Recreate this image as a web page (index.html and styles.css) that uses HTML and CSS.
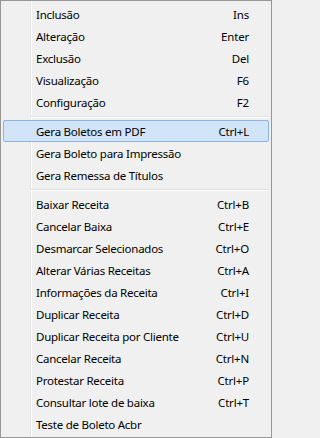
FILE: index.html
```html
<!DOCTYPE html>
<html>
<head>
<meta charset="utf-8">
<link rel="stylesheet" href="styles.css">
</head>
<body>
<div class="menu">
  <div class="item"><span class="label">Inclusão</span><span class="key">Ins</span></div>
  <div class="item"><span class="label">Alteração</span><span class="key">Enter</span></div>
  <div class="item"><span class="label">Exclusão</span><span class="key">Del</span></div>
  <div class="item"><span class="label">Visualização</span><span class="key">F6</span></div>
  <div class="item"><span class="label">Configuração</span><span class="key">F2</span></div>
  <div class="sep"></div>
  <div class="item active"><span class="label">Gera Boletos em PDF</span><span class="key">Ctrl+L</span></div>
  <div class="item"><span class="label">Gera Boleto para Impressão</span><span class="key"></span></div>
  <div class="item"><span class="label">Gera Remessa de Títulos</span><span class="key"></span></div>
  <div class="sep"></div>
  <div class="item"><span class="label">Baixar Receita</span><span class="key">Ctrl+B</span></div>
  <div class="item"><span class="label">Cancelar Baixa</span><span class="key">Ctrl+E</span></div>
  <div class="item"><span class="label">Desmarcar Selecionados</span><span class="key">Ctrl+O</span></div>
  <div class="item"><span class="label">Alterar Várias Receitas</span><span class="key">Ctrl+A</span></div>
  <div class="item"><span class="label">Informações da Receita</span><span class="key">Ctrl+I</span></div>
  <div class="item"><span class="label">Duplicar Receita</span><span class="key">Ctrl+D</span></div>
  <div class="item"><span class="label">Duplicar Receita por Cliente</span><span class="key">Ctrl+U</span></div>
  <div class="item"><span class="label">Cancelar Receita</span><span class="key">Ctrl+N</span></div>
  <div class="item"><span class="label">Protestar Receita</span><span class="key">Ctrl+P</span></div>
  <div class="item"><span class="label">Consultar lote de baixa</span><span class="key">Ctrl+T</span></div>
  <div class="item"><span class="label">Teste de Boleto Acbr</span><span class="key"></span></div>
</div>
</body>
</html>
```

FILE: styles.css
```css
html, body {
  margin: 0;
  padding: 0;
  background: #f0f0f0;
}

.menu {
  box-sizing: border-box;
  width: 272px;
  height: 438px;
  border: 1px solid #979797;
  padding: 2px;
  background:
    linear-gradient(to right,
      transparent 29px,
      #e2e3e3 29px, #e2e3e3 30px,
      #ffffff 30px, #ffffff 31px,
      transparent 31px) no-repeat,
    #f0f0f0;
  background-origin: padding-box;
  font-family: "Noto Sans", "Open Sans", sans-serif;
  font-size: 11.5px;
  color: #000;
  display: flex;
  flex-direction: column;
}

.item {
  box-sizing: border-box;
  height: 22px;
  display: flex;
  align-items: center;
  justify-content: space-between;
  padding: 0 19px 0 32px;
  border: 1px solid transparent;
  border-radius: 2px;
  white-space: nowrap;
}

.item.active {
  background: #d1e4f8;
  border-color: #8ab4e2;
}

.label {
  letter-spacing: -0.25px;
}

.key {
  letter-spacing: -0.2px;
}

.sep {
  height: 7px;
  box-sizing: border-box;
  margin-left: 27px;
  margin-right: 1px;
  padding-top: 3px;
}

.sep::before {
  content: "";
  display: block;
  height: 1px;
  background: #e0e0e0;
  border-bottom: 1px solid #ffffff;
}
```
